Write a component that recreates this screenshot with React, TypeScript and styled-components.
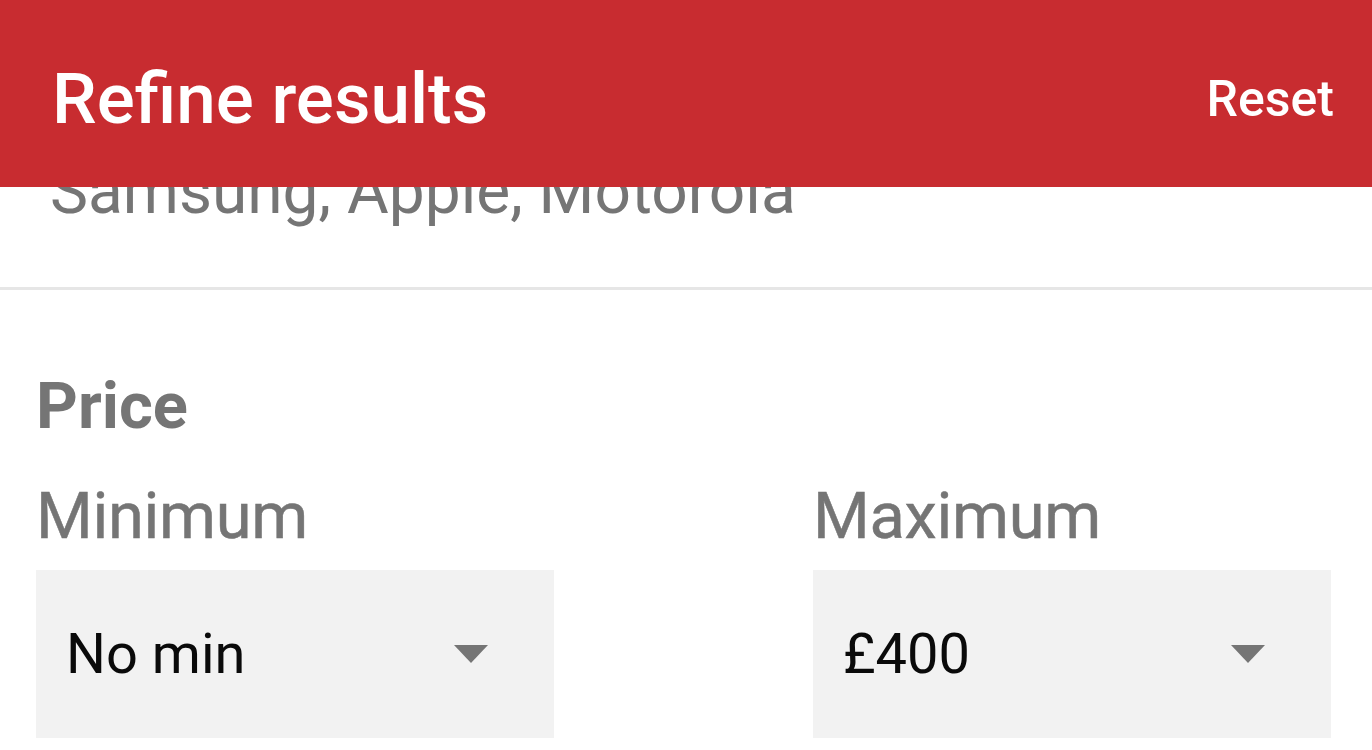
import React from 'react';
import styled, { createGlobalStyle } from 'styled-components';

const GlobalStyle = createGlobalStyle`
  html, body {
    margin: 0;
    padding: 0;
    background: #fff;
  }
  body {
    font-family: Roboto, 'Noto Sans', sans-serif;
    -webkit-font-smoothing: antialiased;
  }
  * {
    box-sizing: border-box;
  }
`;

const Screen = styled.div`
  position: relative;
  width: 1372px;
  height: 750px;
  overflow: hidden;
  background: #fff;
`;

// app bar floats over the scrolled list
const AppBar = styled.header`
  position: absolute;
  top: 0;
  left: 0;
  right: 0;
  z-index: 2;
  height: 187px;
  padding: 10px 38px 0 52px;
  display: flex;
  align-items: center;
  justify-content: space-between;
  background: #c82c30;
  color: #fff;
`;

const Title = styled.h1`
  margin: 0;
  font-size: 71px;
  font-weight: 500;
  line-height: 1;
`;

const ResetButton = styled.button`
  border: 0;
  background: none;
  padding: 0;
  color: #fff;
  font-family: inherit;
  font-size: 50px;
  font-weight: 500;
  line-height: 1;
  cursor: pointer;
`;

const FilterList = styled.div`
  padding-top: 76px; /* list is scrolled: brand heading sits under the bar */
`;

const FilterSection = styled.section<{ $divider?: boolean }>`
  padding: 84px 41px ${(p) => (p.$divider ? '63px' : '0')} 36px;
  border-bottom: ${(p) => (p.$divider ? '3px solid #e6e6e6' : 'none')};
`;

const SectionTitle = styled.h2`
  margin: 0 0 45px;
  font-size: 65px;
  font-weight: 700;
  line-height: 1;
  color: #757575;
`;

const Summary = styled.p`
  margin: 0;
  padding-left: 14px;
  font-size: 64px;
  font-weight: 400;
  line-height: 1;
  color: #757575;
  white-space: nowrap;
`;

const RangeRow = styled.div`
  display: flex;
  justify-content: space-between;
`;

const RangeField = styled.div`
  width: 40%;
  display: flex;
  flex-direction: column;
  gap: 21px;
`;

const FieldLabel = styled.label`
  font-size: 65px;
  font-weight: 400;
  line-height: 1;
  letter-spacing: -0.3px;
  color: #757575;
  -webkit-text-stroke: 0.5px #757575;
`;

const Select = styled.div`
  height: 168px;
  display: flex;
  align-items: center;
  justify-content: space-between;
  padding: 0 66px 0 30px;
  background: #f2f2f2;
  font-size: 56px;
  line-height: 1;
  color: #0a0a0a;
`;

const Caret = styled.span`
  width: 0;
  height: 0;
  border-left: 17.5px solid transparent;
  border-right: 17.5px solid transparent;
  border-top: 18px solid #757575;
`;

const ranges = [
  { label: 'Minimum', value: 'No min' },
  { label: 'Maximum', value: '£400' },
];

const App: React.FC = () => {
  return (
    <Screen>
      <GlobalStyle />
      <AppBar>
        <Title>Refine results</Title>
        <ResetButton>Reset</ResetButton>
      </AppBar>
      <FilterList>
        <FilterSection $divider>
          <Summary>Samsung, Apple, Motorola</Summary>
        </FilterSection>
        <FilterSection>
          <SectionTitle>Price</SectionTitle>
          <RangeRow>
            {ranges.map((r) => (
              <RangeField key={r.label}>
                <FieldLabel>{r.label}</FieldLabel>
                <Select>
                  {r.value}
                  <Caret />
                </Select>
              </RangeField>
            ))}
          </RangeRow>
        </FilterSection>
      </FilterList>
    </Screen>
  );
};

export default App;
